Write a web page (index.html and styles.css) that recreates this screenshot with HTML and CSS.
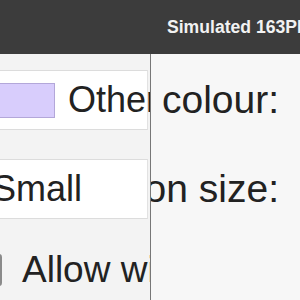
FILE: index.html
```html
<!DOCTYPE html>
<html lang="en">
<head>
    <meta charset="UTF-8">
    <meta name="viewport" content="width=device-width, initial-scale=1.0">
    <title>Simulated 163PPI</title>
    <link rel="stylesheet" href="styles.css">
</head>
<body>
    <div class="topbar">
        <span class="topbar-title">Simulated 163PPI</span>
    </div>

    <div class="split">
        <!-- left: actual size settings -->
        <div class="pane pane-left">
            <div class="row row-box">
                <div class="swatch"></div>
                <span class="label">Other colour:</span>
            </div>
            <div class="row row-box">
                <span class="label label-select">Small</span>
            </div>
            <div class="row row-check">
                <div class="checkbox"></div>
                <span class="label label-check">Allow window resize</span>
            </div>
        </div>

        <!-- right: simulated density labels -->
        <div class="pane pane-right">
            <div class="row row-label">
                <span class="big-label">Other colour:</span>
            </div>
            <div class="row row-label">
                <span class="big-label">Button size:</span>
            </div>
        </div>
    </div>
</body>
</html>
```

FILE: styles.css
```css
html, body {
    margin: 0;
    padding: 0;
    height: 100%;
}
body {
    font-family: 'Liberation Sans', Arial, sans-serif;
    background-color: #f5f5f5;
    color: #222;
    overflow: hidden;
}
.topbar {
    height: 54px;
    background-color: #3c3c3c;
    display: flex;
    align-items: center;
    padding-left: 167px;
    white-space: nowrap;
    overflow: hidden;
}
.topbar-title {
    color: #f2f2f2;
    font-size: 17.6px;
    font-weight: bold;
}
.split {
    display: flex;
    height: 246px;
}
.pane {
    overflow: hidden;
    display: flex;
    flex-direction: column;
    gap: 29px;
    padding-top: 16px;
}
.pane-left {
    width: 150px;
    flex-shrink: 0;
    border-right: 1px solid #777;
    background-color: #f3f3f3;
}
.pane-right {
    flex: 1;
    background-color: #f7f7f7;
}
.row {
    display: flex;
    align-items: center;
    flex-shrink: 0;
    white-space: nowrap;
}
.row-box {
    height: 58px;
    margin-right: 2px;
    background-color: white;
    border-top: 1px solid #dcdcdc;
    border-bottom: 1px solid #dcdcdc;
    border-right: 1px solid #e2e2e2;
}
.row-check {
    height: 44px;
}
.row-label {
    height: 60px;
    justify-content: flex-end;
    padding-right: 21px;
}
.label {
    font-size: 36px;
    flex-shrink: 0;
}
.label-select {
    margin-left: -8px;
}
.label-check {
    font-size: 37px;
}
.big-label {
    font-size: 39px;
    flex-shrink: 0;
}
.swatch {
    width: 64px;
    height: 33px;
    margin-left: -11px;
    margin-right: 13px;
    flex-shrink: 0;
    background-color: #d8cdfc;
    border: 1px solid #b3a7d9;
}
.checkbox {
    width: 28px;
    height: 28px;
    margin-left: -30px;
    margin-right: 20px;
    flex-shrink: 0;
    background-color: white;
    border: 2px solid #8a8a8a;
    border-radius: 3px;
}
```
